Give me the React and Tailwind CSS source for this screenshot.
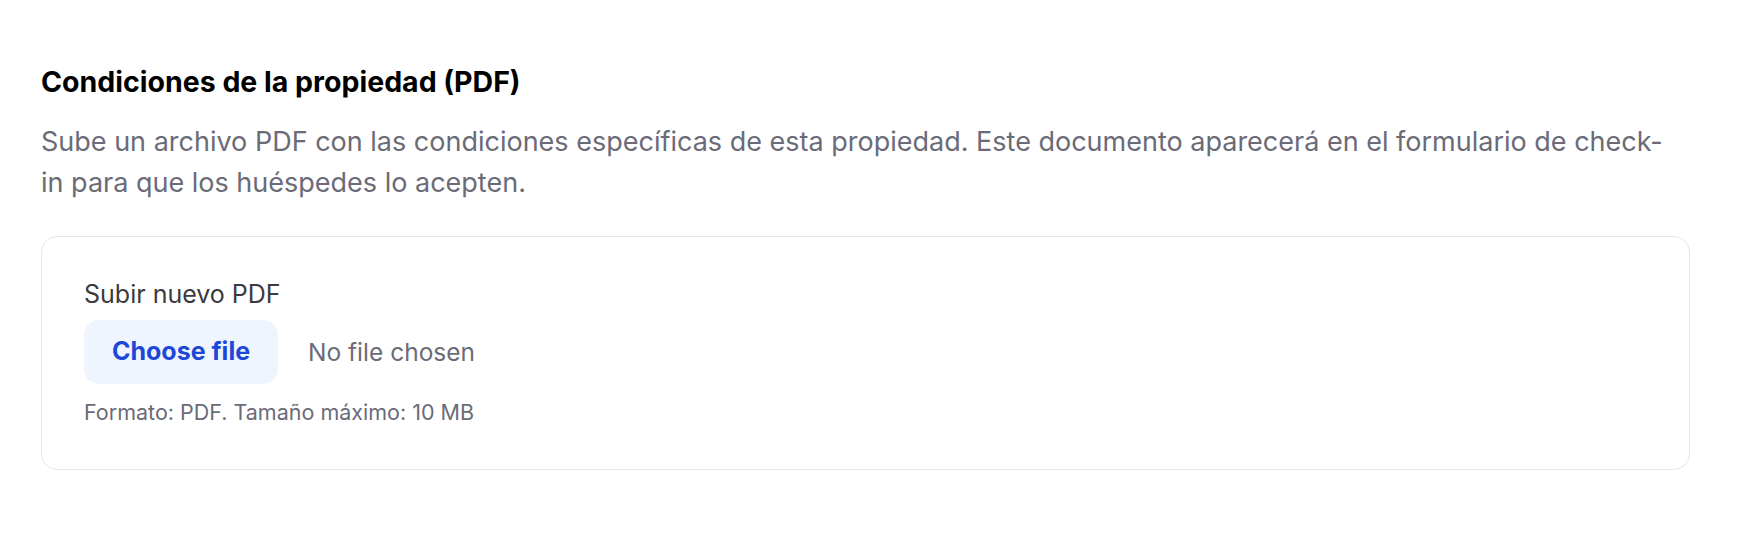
const App = () => {
    return (
        <div className="min-h-screen bg-white" style={{fontFamily: 'Inter, "Noto Sans", sans-serif'}}>
            <div className="pl-[41px] pr-[48px] pt-[64px] pb-[63px]">
                <h2 className="text-[28.5px] leading-[36px] font-bold text-black">
                    Condiciones de la propiedad (PDF)
                </h2>
                <p className="mt-[21px] pr-[12px] text-[27px] leading-[41px] text-[#6b6b78]">
                    Sube un archivo PDF con las condiciones específicas de esta propiedad. Este documento aparecerá en el formulario de check-in para que los huéspedes lo acepten.
                </p>
                <div className="mt-[33px] rounded-[16px] border border-[#e5e5ea] px-[42px] pt-[41px] pb-[43px]">
                    <label className="block text-[25px] leading-[32px] text-[#3a3a40]">
                        Subir nuevo PDF
                    </label>
                    <div className="mt-[10px] flex items-center gap-[30px]">
                        <button
                            type="button"
                            className="h-[64px] w-[194px] rounded-[15px] bg-[#eff5fe] text-[25px] font-bold text-[#1d47d8]">
                            Choose file
                        </button>
                        <span className="text-[24.5px] text-[#6b6b78]">No file chosen</span>
                    </div>
                    <p className="mt-[14px] text-[21.5px] leading-[28px] text-[#6b6b78]">
                        Formato: PDF. Tamaño máximo: 10 MB
                    </p>
                </div>
            </div>
        </div>
    );
};
export default App;
